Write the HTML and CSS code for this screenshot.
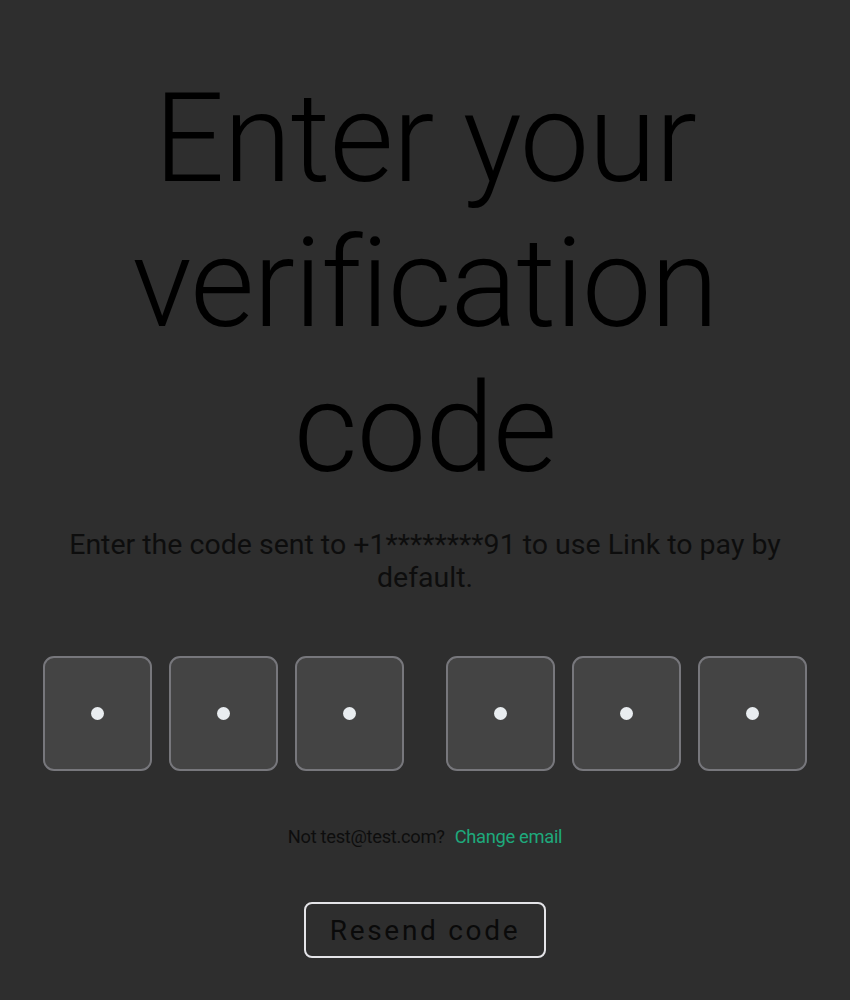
FILE: index.html
```html
<!DOCTYPE html>
<html>
<head>
<meta charset="utf-8">
<link rel="stylesheet" href="styles.css">
</head>
<body>
<main class="screen">
  <h1 class="title">Enter your verification code</h1>
  <p class="subtitle">Enter the code sent to +1********91 to use Link to pay by default.</p>
  <div class="otp">
    <div class="group">
      <div class="cell"><span class="dot"></span></div>
      <div class="cell"><span class="dot"></span></div>
      <div class="cell"><span class="dot"></span></div>
    </div>
    <div class="group">
      <div class="cell"><span class="dot"></span></div>
      <div class="cell"><span class="dot"></span></div>
      <div class="cell"><span class="dot"></span></div>
    </div>
  </div>
  <p class="email">Not test@test.com? <a class="change" href="#">Change email</a></p>
  <button class="resend">Resend code</button>
</main>
</body>
</html>
```
FILE: styles.css
```css
html, body {
  margin: 0;
  padding: 0;
  background: #2e2e2e;
}
.screen {
  width: 850px;
  height: 1000px;
  display: flex;
  flex-direction: column;
  align-items: center;
  font-family: Roboto, "Liberation Sans", sans-serif;
  color: #000;
  box-sizing: border-box;
  padding-top: 66px;
}
.title {
  margin: 0;
  width: 640px;
  font-weight: 300;
  font-size: 124px;
  line-height: 145px;
  letter-spacing: -1px;
  text-align: center;
  color: #000;
}
.subtitle {
  margin: 27px 0 0;
  width: 770px;
  font-size: 28.5px;
  line-height: 33px;
  text-align: center;
  color: #0d0d0d;
}
.otp {
  margin-top: 62px;
  display: flex;
  gap: 42px;
}
.group {
  display: flex;
  gap: 17px;
}
.cell {
  width: 109px;
  height: 115px;
  box-sizing: border-box;
  background: #444444;
  border: 2px solid #77777c;
  border-radius: 11px;
  display: flex;
  align-items: center;
  justify-content: center;
}
.dot {
  width: 13px;
  height: 13px;
  border-radius: 50%;
  background: #e9edf0;
}
.email {
  margin: 54px 0 0;
  font-size: 18.3px;
  line-height: 24px;
  color: #0d0d0d;
  letter-spacing: -0.3px;
}
.change {
  color: #1ea97c;
  text-decoration: none;
  margin-left: 6px;
}
.resend {
  margin-top: 53px;
  width: 242px;
  height: 56px;
  background: transparent;
  border: 2px solid #e4e4e8;
  border-radius: 8px;
  font-family: Roboto, "Liberation Sans", sans-serif;
  font-size: 28px;
  letter-spacing: 2.7px;
  color: #0a0a0a;
  padding: 0;
}
```
